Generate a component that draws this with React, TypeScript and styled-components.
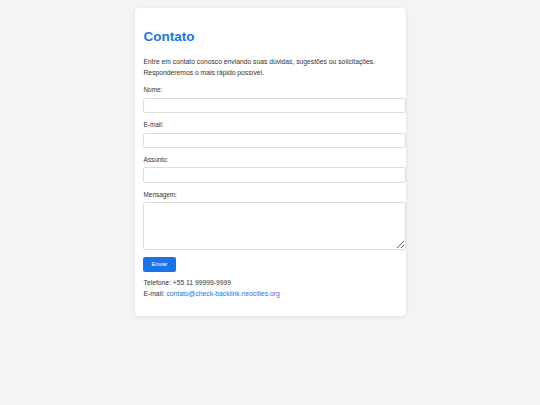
import styled, { createGlobalStyle } from "styled-components";

const GlobalStyle = createGlobalStyle`
  html, body {
    margin: 0;
    padding: 0;
    background: #f4f4f4;
    font-family: "Liberation Sans", Arial, sans-serif;
    color: #333;
  }
`;

const Page = styled.div`
  padding-top: 8px;
  min-height: 405px;
  box-sizing: border-box;
`;

const Card = styled.div`
  width: 271px;
  margin: 0 auto;
  padding: 9px;
  box-sizing: border-box;
  background: #fff;
  border-radius: 4.5px;
  box-shadow: 0 1px 5px rgba(0, 0, 0, 0.09);
`;

const Title = styled.h1`
  font-size: 13.5px;
  font-weight: 700;
  color: #1a73e8;
  margin: 12px 0 11px;
  line-height: 15.5px;
`;

const Text = styled.p<{ $gap?: number }>`
  font-size: 6.75px;
  line-height: 11px;
  margin: 0 0 ${(p) => p.$gap ?? 0}px;
`;

const Field = styled.div`
  margin-bottom: 7.6px;
`;

const Label = styled.label`
  display: block;
  font-size: 6.4px;
  line-height: 7.2px;
  margin-bottom: 4.4px;
`;

const Input = styled.input`
  display: block;
  width: calc(100% + 10px);
  height: 15.6px;
  margin-left: -0.5px;
  box-sizing: border-box;
  border: 1px solid #ddd;
  border-radius: 2px;
  padding: 3px 4px;
  font-family: inherit;
  font-size: 6.75px;
  background: #fff;
`;

const Area = styled.textarea`
  display: block;
  width: calc(100% + 10px);
  height: 47.5px;
  margin-left: -0.5px;
  box-sizing: border-box;
  border: 1px solid #ddd;
  border-radius: 2px;
  padding: 3px 4px;
  font-family: inherit;
  font-size: 6.75px;
  background: #fff;
  resize: vertical;
`;

const Button = styled.button`
  display: block;
  width: 33px;
  height: 14.5px;
  margin: 6px 0 5.5px -0.5px;
  padding: 0;
  border: none;
  border-radius: 2px;
  background: #1a73e8;
  color: #fff;
  font-family: inherit;
  font-size: 5.6px;
  cursor: pointer;
`;

const Link = styled.a`
  color: #1a73e8;
  text-decoration: none;
`;

export default function App() {
  return (
    <Page>
      <GlobalStyle />
      <Card>
        <Title>Contato</Title>
        <Text $gap={8.7}>
          Entre em contato conosco enviando suas dúvidas, sugestões ou solicitações.
          <br />
          Responderemos o mais rápido possível.
        </Text>
        <form onSubmit={(e) => e.preventDefault()}>
          <Field>
            <Label htmlFor="nome">Nome:</Label>
            <Input id="nome" type="text" />
          </Field>
          <Field>
            <Label htmlFor="email">E-mail:</Label>
            <Input id="email" type="email" />
          </Field>
          <Field>
            <Label htmlFor="assunto">Assunto:</Label>
            <Input id="assunto" type="text" />
          </Field>
          <Field>
            <Label htmlFor="mensagem">Mensagem:</Label>
            <Area id="mensagem" />
          </Field>
          <Button type="submit">Enviar</Button>
        </form>
        <Text>Telefone: +55 11 99999-9999</Text>
        <Text $gap={7.3}>
          E-mail: <Link href="#">contato@check-backlink.neocities.org</Link>
        </Text>
      </Card>
    </Page>
  );
}
